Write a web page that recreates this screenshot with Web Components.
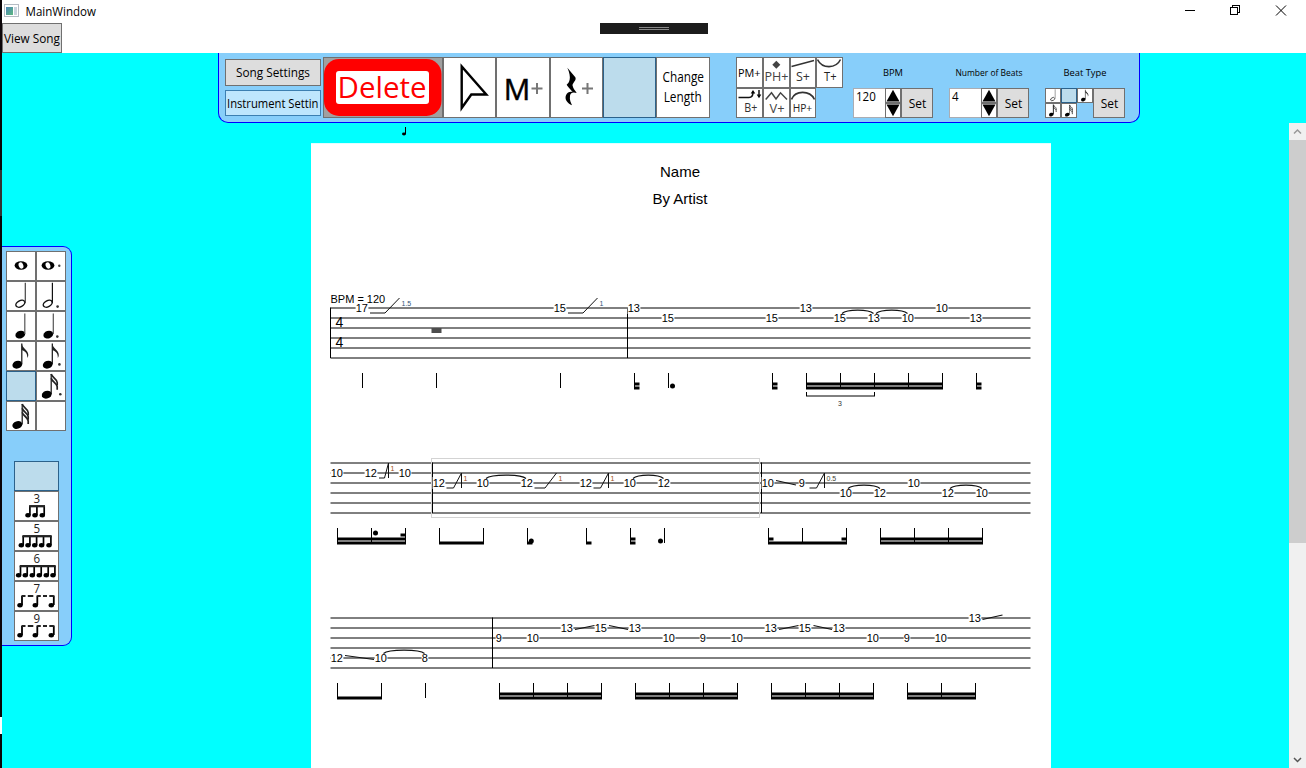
<!DOCTYPE html>
<html lang="en">
<head>
<meta charset="utf-8">
<title>MainWindow</title>
<style>
html,body{margin:0;height:100%;overflow:hidden;background:#fff}
body{font-family:"Open Sans","Noto Sans",sans-serif;font-size:12px;color:#000}
</style>
</head>
<body>
<main-window></main-window>
<script>
const SEGOE = '"Open Sans","Noto Sans",sans-serif';
const ARIAL = '"Liberation Sans",Arial,sans-serif';

/* text fitted to a given width, from x, on baseline y */
const txt = (s, x, y, w, size, fill = '#000', font = SEGOE) =>
  `<text x="${x}" y="${y}" textLength="${w}" lengthAdjust="spacingAndGlyphs" style='font:${size}px ${font}' fill="${fill}">${s}</text>`;

/* a single note: head centre, stem x and top, number of flags, optional dot */
function note({ x, y, sx, top = 1.5, flags = 0, open = false, dot, stem = '#111', sw = 1.2 }) {
  let o = open
    ? `<ellipse cx="${x}" cy="${y}" rx="4.8" ry="3" transform="rotate(-28 ${x} ${y})" fill="#fff" stroke="#111" stroke-width="1.4"/>`
    : `<ellipse cx="${x}" cy="${y}" rx="5" ry="3.8" transform="rotate(-18 ${x} ${y})" fill="#000"/>`;
  o += `<path d="M${sx} ${top}V${y - .5}" stroke="${stem}" stroke-width="${sw}"/>`;
  if (flags === 1)
    o += `<path d="M${sx} ${top}c.5 5 6.500 6.500 6.500 11.500c0 1-.3 2-1 3c.3-5-2.500-7-5.500-8z" fill="#222"/>`;
  else for (let i = 0; i < flags; i++) {
    const t = top + i * 4.200;
    o += `<path d="M${sx} ${t}c.8 3.500 5.500 4.500 6 8.500v3" fill="none" stroke="#222" stroke-width="1.700"/>`;
  }
  if (dot) o += `<circle cx="${dot[0]}" cy="${dot[1]}" r="1.300" fill="#333"/>`;
  return o;
}
const whole = x => `<ellipse cx="${x}" cy="13.500" rx="6.400" ry="4.200"/><ellipse cx="${x}" cy="13.500" rx="2.300" ry="3.300" transform="rotate(-20 ${x} 13.500)" fill="#fff"/>`;

const NOTES = {
  whole: whole(14),
  wholeDot: whole(11) + '<circle cx="22.300" cy="13.700" r="1.200" fill="#444"/>',
  half: note({ x: 13.3, y: 21.7, sx: 18.3, top: .7, open: true, stem: '#444' }),
  miniHalf: note({ x: 13.3, y: 21.7, sx: 18.8, top: .7, open: true, stem: '#bbb', sw: 3 }),
  halfDot: note({ x: 10.7, y: 21.7, sx: 15.4, top: .7, open: true, dot: [20.6, 24.6] }),
  quarter: note({ x: 13.3, y: 22.6, sx: 17.8, stem: '#555' }),
  quarterDot: note({ x: 11.3, y: 22.6, sx: 16.3, stem: '#555', dot: [20.3, 24.6] }),
  eighth: note({ x: 10.3, y: 22.7, sx: 14.8, flags: 1 }),
  eighthDot: note({ x: 10.7, y: 22.7, sx: 15.3, flags: 1, dot: [22.4, 22.4] }),
  sixteenth: note({ x: 10.3, y: 22.7, sx: 14.8, flags: 2, sw: 2 }),
  sixteenthDot: note({ x: 9.7, y: 22.7, sx: 14.2, top: 2, flags: 2, dot: [23.3, 22.3] }),
  thirtysecond: note({ x: 10.3, y: 23, sx: 15.2, top: 2, flags: 3 }),
  blank: ''
};

/* tuplet pictures, in a 43 x 28 box */
function tuplet(n) {
  let o = txt(n, 18.400, 11.200, 6.600, 12, '#222');
  const heads = { 3: [13, 20, 27.300], 5: [6.300, 13, 19.700, 26.600, 34], 6: [3.600, 10.300, 17.300, 24.300, 31.300, 38] }[n];
  if (heads) {
    heads.forEach(h => o += `<ellipse cx="${h}" cy="23.200" rx="2.700" ry="2.200"/><path d="M${h + 1.9} 14V23" stroke="#000" stroke-width="1.700"/>`);
    o += `<path d="M${heads[0] + 1.1} 14.200H${heads.at(-1) + 2.7}" stroke="#222" stroke-width="2.300"/>`;
  } else {
    [[5, 7], [20.300, 22.300], [36.300, 38.800]].forEach(([h, s], i) =>
      o += `<ellipse cx="${h}" cy="23.300" rx="2.700" ry="2.200"/><path d="M${s} 23V13.500" stroke="#000" stroke-width="1.800"/><path d="${i < 2 ? `M${s} 14h3.500` : `M${s} 14h-4.500`}" stroke="#222" stroke-width="2"/>`);
    o += '<path d="M12.800 14h5.500M28 14h4" stroke="#222" stroke-width="2"/>';
  }
  return o;
}

const plus = (x, y, r) => `<path d="M${x - r} ${y}h${2 * r}M${x} ${y - r}v${2 * r}" stroke="#777" stroke-width="2"/>`;

/* toolbar pictures */
const TOOLS = {
  song: txt('Song Settings', 236, 77, 74, 12),
  instrument: txt('Instrument Settin', 227, 108, 91.500, 12),
  view: txt('View Song', 4, 43, 56, 12),
  remove: '<rect x="324" y="59" width="117.500" height="57" rx="15" fill="#f00"/><rect x="336" y="71" width="93" height="33" rx="3" fill="#fff"/>' + txt('Delete', 337.500, 98, 89, 30, '#f00'),
  cursor: '<path d="M461.700 66.500V108L471.300 94.500H486.300Z" fill="#fff" stroke="#000" stroke-width="2.400"/>',
  measure: `<g stroke="#000" stroke-width=".5">${txt('M', 503.800, 100, 26.500, 30)}</g>` + plus(537, 88.500, 5.500),
  rest: '<path transform="translate(320 50) scale(.33333)" d="M742 53L766 82C771 92 755 100 758 108C760 116 766 122 770 129C758 124 750 130 750 138C748 150 753 158 756 166C742 160 733 148 738 136C741 126 752 124 758 126C750 116 742 108 740 104C748 98 756 84 742 53Z"/>' + plus(587.500, 88.500, 5.500),
  blank: '',
  length: txt('Change', 662.500, 82, 41.500, 14) + txt('Length', 663.700, 101.500, 38, 14),
  pm: txt('PM+', 738, 77, 22.500, 11),
  ph: '<path d="M776.300 60.700l4 4l-4 4l-4-4z" fill="#444"/>' + txt('PH+', 764.500, 80.500, 24, 13, '#444'),
  s: '<path d="M791.500 66.500L814 60.500" stroke="#333" stroke-width="1.600"/>' + txt('S+', 796, 80.500, 14, 12.500, '#333'),
  t: '<path d="M817.500 59.500C822 69 836 69 840.500 59.500" stroke="#333" stroke-width="1.600" fill="none"/>' + txt('T+', 824, 80.500, 12.500, 12.500, '#222'),
  b: '<path d="M738.500 97.500H749C752 97.500 753 96 753 92" stroke="#111" stroke-width="1.500" fill="none"/><path d="M750.700 93.500l2.300-3.500l2.300 3.500zM756.700 94.500h4.600l-2.300 3.800z"/><path d="M759 90v6" stroke="#111" stroke-width="1.500"/>' + txt('B+', 744.300, 112, 13, 12.500, '#333'),
  v: '<path d="M765.700 99.500L771.500 92.800L776 99L780.500 92.800L787 99.500" stroke="#444" stroke-width="1.500" fill="none"/>' + txt('V+', 769.500, 112.500, 15, 12.500, '#444'),
  hp: '<path d="M791.500 99.500C795 90 810 90 814.500 99.500" stroke="#333" stroke-width="1.600" fill="none"/>' + txt('HP+', 792.700, 111.500, 19.500, 10.500, '#222'),
};

class Base extends HTMLElement {
  connectedCallback() {
    if (!this.shadowRoot) this.attachShadow({ mode: 'open' }).innerHTML = this.render();
  }
}

/* push button: box="x y w h" gives its size and the origin of its picture */
class ToolButton extends Base {
  render() {
    const [x, y, w, h] = this.getAttribute('box').split(' ').map(Number);
    const look = { on: ['#bcdcec', '#2c628b'], hot: ['#bee6fd', '#3c7fb1'], face: ['#ddd', '#707070'], dark: ['#a0a0a0', '#707070'] }[this.getAttribute('look')] || ['#fff', '#707070'];
    return `<style>:host{display:block;flex:none;box-sizing:border-box;width:${w}px;height:${h}px;border:1px solid ${look[1]};background:${look[0]}}svg{display:block}</style>
    <svg width="${w - 2}" height="${h - 2}" viewBox="${x + 1} ${y + 1} ${w - 2} ${h - 2}">${TOOLS[this.getAttribute('icon')] || ''}</svg>`;
  }
}

class NoteButton extends Base {
  render() {
    const k = this.getAttribute('kind'), on = this.hasAttribute('on'), small = this.hasAttribute('small');
    const [w, h] = small ? [16, 15] : [30, 30];
    return `<style>:host{display:block;box-sizing:border-box;width:${w}px;height:${h}px;border:1px solid ${on ? '#2c628b' : '#707070'};background:${on ? '#bcdcec' : '#fff'}}svg{display:block}</style>
    <svg width="${w - 2}" height="${h - 2}" viewBox="0 0 28 28">${on ? '' : NOTES[k]}</svg>`;
  }
}

class TupletButton extends Base {
  render() {
    const on = this.hasAttribute('on');
    return `<style>:host{display:block;box-sizing:border-box;width:45px;height:30px;border:1px solid ${on ? '#2c628b' : '#707070'};background:${on ? '#bcdcec' : '#fff'}}svg{display:block}</style>
    <svg width="43" height="28">${on ? '' : tuplet(this.getAttribute('n'))}</svg>`;
  }
}

/* caption above an editor and its Set button */
class FieldGroup extends Base {
  render() {
    const w = this.getAttribute('width'), cap = this.getAttribute('caption'), cw = +this.getAttribute('cap-width');
    return `<style>:host{display:flex;flex:none;flex-direction:column;width:${w}px;height:61px}.cap{display:block;height:31px}.row{display:flex}
    .set{box-sizing:border-box;width:32px;height:30px;border:1px solid #707070;background:#ddd}svg{display:block}</style>
    <svg class="cap" width="${w}" height="31">${txt(cap, (w - cw) / 2, 19, cw, 9.300)}</svg>
    <div class="row"><slot></slot><div class="set"><svg width="30" height="28">${txt('Set', 6.700, 19, 17.500, 12)}</svg></div></div>`;
  }
}

class NumberSpinner extends Base {
  render() {
    const v = this.getAttribute('value');
    return `<style>:host{display:flex;height:30px}.in{box-sizing:border-box;width:32px;height:30px;background:#fff;border:1px solid #abadb3;border-right:0}
    .s{box-sizing:border-box;width:16px;height:15px;border:1px solid #707070;background:#fff}svg{display:block}</style>
    <div class="in"><svg width="31" height="28">${txt(v, 2, 12, v.length * 6.600, 12)}</svg></div>
    <div><div class="s"><svg width="14" height="13"><path d="M7 .8L13.500 12.500H.5Z"/></svg></div><div class="s"><svg width="14" height="13"><path d="M7 12.200L13.500 .5H.5Z"/></svg></div></div>`;
  }
}

class ToolBar extends Base {
  render() {
    const b = (box, icon, look = '') => `<tool-button box="${box}" icon="${icon}" look="${look}"></tool-button>`;
    return `<style>:host{display:flex;box-sizing:border-box;width:922px;height:70px;background:#87cefa;border:1px solid #00f;border-top:0;border-radius:0 0 10px 10px;padding:4px 0 0 6px}
    .set{display:flex;flex:none;flex-direction:column;gap:4px;padding-top:2px;width:98px}
    .fx{display:grid;flex:none;grid-template-columns:27px 27px 26px 27px;grid-template-rows:31px 30px;margin:0 10px 0 26px}
    field-group+field-group{margin-left:16px}.beats{display:grid;grid-template-columns:repeat(3,16px);grid-template-rows:15px 15px}</style>
    <div class="set">${b('225 59 96 27', 'song', 'face')}${b('225 90 96 26', 'instrument', 'hot')}</div>
    ${b('323 57 120 61', 'remove', 'dark')}${b('443 57 53 61', 'cursor')}${b('496 57 54 61', 'measure')}${b('550 57 53 61', 'rest')}${b('603 57 53 61', 'blank', 'on')}${b('656 57 54 61', 'length')}
    <div class="fx">${b('736 57 27 31', 'pm')}${b('763 57 27 31', 'ph')}${b('790 57 26 31', 's')}${b('816 57 27 31', 't')}${b('736 88 27 30', 'b')}${b('763 88 27 30', 'v')}${b('790 88 26 30', 'hp')}</div>
    <field-group caption="BPM" cap-width="20" width="80"><number-spinner value="120"></number-spinner></field-group>
    <field-group caption="Number of Beats" cap-width="67" width="80"><number-spinner value="4"></number-spinner></field-group>
    <field-group caption="Beat Type" cap-width="43" width="80"><div class="beats">
      <note-button small kind="miniHalf"></note-button><note-button small on></note-button><note-button small kind="eighth"></note-button><note-button small kind="sixteenth"></note-button><note-button small kind="thirtysecond"></note-button></div></field-group>`;
  }
}

class NotePanel extends Base {
  render() {
    const kinds = ['whole', 'wholeDot', 'half', 'halfDot', 'quarter', 'quarterDot', 'eighth', 'eighthDot', null, 'sixteenthDot', 'thirtysecond', 'blank'];
    return `<style>:host{display:block;box-sizing:border-box;width:70px;height:400px;background:#87cefa;border:1px solid #00f;border-left:0;border-radius:0 9px 9px 0;padding:4px 0 0 4px}
    .n{display:grid;grid-template-columns:30px 30px}.t{margin:30px 0 0 8px}</style>
    <div class="n">${kinds.map(k => k ? `<note-button kind="${k}"></note-button>` : '<note-button on></note-button>').join('')}</div>
    <div class="t"><tuplet-button on></tuplet-button>${[3, 5, 6, 7, 9].map(n => `<tuplet-button n="${n}"></tuplet-button>`).join('')}</div>`;
  }
}

/* Score data. y is the top string; notes are [x, string, fret]. */
const SYSTEMS = [
  { y: 308, bars: [330, 627],
    stems: [362, 436, 560, 634, 668, 772, 806, 840, 874, 908, 942, 976],
    notes: [[362, 0, 17], [560, 0, 15], [634, 0, 13], [668, 1, 15], [772, 1, 15], [806, 0, 13], [840, 1, 15], [874, 1, 13], [908, 1, 10], [942, 0, 10], [976, 1, 13]],
    beams: [[806, 943, 2], [634, 639.5, 2], [772, 777.5, 2], [976, 981.5, 2]],
    dots: [[672.5, 78]], slurs: [[842, 873.5, 5.5, 3.5], [876, 907.5, 5.5, 3.5]], slides: [],
    bends: [[370, 385, 399.5, 5, '1.5', 0], [568, 583, 597.5, 5, '1', 0]] },
  { y: 463, bars: [432, 761],
    stems: [337, 371, 405, 439, 483, 527, 586, 630, 664, 768, 802, 846, 880, 914, 948, 982],
    notes: [[337, 1, 10], [371, 1, 12], [405, 1, 10], [439, 2, 12], [483, 2, 10], [527, 2, 12], [586, 2, 12], [630, 2, 10], [664, 2, 12], [768, 2, 10], [802, 2, 9], [846, 3, 10], [880, 3, 12], [914, 2, 10], [948, 3, 12], [982, 3, 10]],
    beams: [[337, 406, 2], [439, 484, 1], [527, 532.5, 1], [586, 591.5, 1], [630, 635.5, 2], [768, 847, 1], [880, 983, 2]],
    bits: [[400.5, 405, 72], [768, 773.5, 76], [841.5, 847, 76]],
    dots: [[375.5, 70], [531.3, 78], [660.5, 78]],
    slurs: [[486, 526, 15.5, 3.5], [633, 663.5, 15.5, 3.5], [848, 880, 25.500, 3.500], [950, 982, 25.500, 3.500]],
    slides: [[776, 17.5, 796, 22]],
    bends: [[379, 384.5, 388.5, 15, '1', 1], [446.5, 453.5, 461.5, 25, '1', 1], [534.5, 545, 556.5, 25, '1', 0], [593.5, 600.5, 608.5, 25, '1', 1], [809.5, 816.5, 824.5, 25, '0.5', 1]] },
  { y: 618, bars: [492],
    stems: [337, 381, 425, 499, 533, 567, 601, 635, 669, 703, 737, 771, 805, 839, 873, 907, 941, 975],
    notes: [[337, 4, 12], [381, 4, 10], [425, 4, 8], [499, 2, 9], [533, 2, 10], [567, 1, 13], [601, 1, 15], [635, 1, 13], [669, 2, 10], [703, 2, 9], [737, 2, 10], [771, 1, 13], [805, 1, 15], [839, 1, 13], [873, 2, 10], [907, 2, 9], [941, 2, 10], [975, 0, 13]],
    beams: [[337, 382, 1], [499, 602, 2], [635, 738, 2], [771, 874, 2], [907, 976, 2]],
    dots: [], slurs: [[383.5, 424.5, 35.5, 3.5]],
    slides: [[345, 37.5, 374, 41.5], [575, 11.5, 594.5, 7.500], [609, 7.500, 628, 11.500], [779, 11.500, 798.500, 7.500], [813.500, 7.500, 832, 11.500], [982.500, 1.500, 1002.500, -3]],
    bends: [] }
];

class TabSystem extends Base {
  render() {
    const i = +this.getAttribute('index'), s = SYSTEMS[i], Y = s.y;
    let o = '';
    for (let k = 0; k < 6; k++) o += `<path d="M330.500 ${Y + k * 10}H1030.500" stroke="#000"/>`;
    s.bars.forEach(x => o += `<path d="M${x + .5} ${Y - .5}V${Y + 50}" stroke="#000"/>`);
    s.beams.forEach(([a, b, n]) => { for (let k = 0; k < n; k++) o += `<path d="M${a} ${Y + 80 - 4 * k}H${b}" stroke="#000" stroke-width="3"/>`; });
    (s.bits || []).forEach(([a, b, dy]) => o += `<path d="M${a} ${Y + dy}H${b}" stroke="#000" stroke-width="3"/>`);
    s.stems.forEach(x => o += `<path d="M${x + .5} ${Y + 65}V${Y + 80}" stroke="#000"/>`);
    s.dots.forEach(([x, dy]) => o += `<circle cx="${x}" cy="${Y + dy}" r="2.500"/>`);
    s.notes.forEach(([x, st, f]) => {
      const w = String(f).length * 6.100, y = Y + st * 10;
      o += `<rect x="${x - w / 2 - .3}" y="${y - 6}" width="${w + .6}" height="12" fill="#fff"/>` +
        `<text x="${x - w / 2 - .2}" y="${y + 4}" style='font:11px ${ARIAL}'>${f}</text>`;
    });
    s.slurs.forEach(([a, b, dy, h]) => o += `<path d="M${a} ${Y + dy}C${a + 5} ${Y + dy - h * 1.300} ${b - 5} ${Y + dy - h * 1.300} ${b} ${Y + dy}" fill="none" stroke="#111" stroke-width="1.100"/>`);
    s.slides.forEach(([a, b, c, d]) => o += `<path d="M${a} ${Y + b}L${c} ${Y + d}" stroke="#111" stroke-width="1.200"/>`);
    s.bends.forEach(([a, b, c, dy, t, rel]) => {
      o += `<path d="M${a} ${Y + dy}H${b}L${c} ${Y + dy - 15}${rel ? 'v15' : ''}" fill="none" stroke="#111"/>`;
      o += `<text x="${c + 2}" y="${Y + dy - 7}" style='font:7px ${ARIAL}' fill="${t === '0.5' ? '#443' : i ? '#a04a10' : '#357'}">${t}</text>`;
    });
    if (i === 0) o += `<text x="330.500" y="303" style='font:11px ${ARIAL}'>BPM = 120</text>
      <text x="335.500" y="326.500" style='font:14px ${ARIAL}'>4</text><text x="335.500" y="346.500" style='font:14px ${ARIAL}'>4</text>
      <rect x="431.500" y="328" width="10" height="5" fill="#4d4d4d"/>
      <path d="M806.500 392V396M874.500 392V396M806 396H875" stroke="#000"/><text x="838" y="405.500" style='font:7px ${ARIAL}' fill="#333">3</text>`;
    if (i === 1) o += '<rect x="431.500" y="458.500" width="328" height="59" fill="none" stroke="#d3d3d3"/>';
    return `<style>:host{display:block;height:155px}svg{display:block}</style><svg width="740" height="155" viewBox="311 ${Y - 23} 740 155">${o}</svg>`;
  }
}

class ScorePage extends Base {
  render() {
    return `<style>:host{display:block;box-sizing:border-box;width:740px;height:625px;overflow:hidden;background:#fff;font:15px/27px ${ARIAL};text-align:center;padding-top:14px;border-top:1px solid #dff}
    p{margin:0;padding-right:2px}.by{margin-bottom:73px}</style><p>Name</p><p class="by">By Artist</p>
    <tab-system index="0"></tab-system><tab-system index="1"></tab-system><tab-system index="2"></tab-system>`;
  }
}

class ScrollBar extends Base {
  render() {
    return `<style>:host{display:flex;flex-direction:column;width:17px;background:#f0f0f0}.thumb{height:403px;background:#cdcdcd}.gap{flex:1}svg{display:block}</style>
    <svg width="17" height="17"><path d="M5 10.500L8.500 7L12 10.500" fill="none" stroke="#999" stroke-width="1.500"/></svg><div class="thumb"></div><div class="gap"></div>
    <svg width="17" height="17"><path d="M5 7L8.500 10.500L12 7" fill="none" stroke="#555" stroke-width="1.500"/></svg>`;
  }
}

class TitleBar extends Base {
  render() {
    return `<style>:host{display:flex;height:23px;background:#fff}svg{display:block}.sp{flex:1}</style>
    <svg width="120" height="23"><defs><linearGradient id="g" x2="1" y2="1"><stop stop-color="#4a86b8"/><stop offset="1" stop-color="#5cb87e"/></linearGradient></defs>
      <rect x="2.500" y="4.500" width="14" height="12" fill="#fff" stroke="#b5bcc4"/><rect x="4" y="7" width="7" height="8" fill="url(#g)"/><rect x="12" y="7" width="3" height="8" fill="#c9d4df"/>${txt('MainWindow', 23.500, 16, 70.500, 12)}</svg><div class="sp"></div>
    <svg width="136" height="23" viewBox="1170 0 136 23" fill="none" stroke="#000" shape-rendering="crispEdges"><path d="M1185 10.500h10M1230.500 7.500h7v7h-7zM1232.500 7.500v-2h7v7h-2"/><path d="M1276 5.500l10 10M1286 5.500l-10 10" shape-rendering="auto"/></svg>`;
  }
}

class MainWindow extends Base {
  render() {
    return `<style>:host{display:flex;height:768px}
    .edge{width:2px;height:768px;flex:none;background:linear-gradient(#0b0508 170px,#333 170px 216px,#0b0508 216px 717px,#fff 717px 734px,#0b0508 734px)}
    .win{position:relative;flex:1;display:flex;flex-direction:column}
    .menu{display:flex;height:30px;background:#fff}
    .grip{position:absolute;left:598px;top:23px;width:108px;height:11px;background:#1c1c1c}
    .work{flex:1;background:#0ff;display:flex;flex-direction:column}
    tool-bar{margin-left:216px}
    .body{flex:1;display:flex}note-panel{margin-top:123px;flex:none}
    .doc{flex:1;padding-left:239px}.mark{display:block}svg{display:block}</style>
    <div class="edge"></div>
    <div class="win"><title-bar></title-bar>
      <div class="menu"><tool-button box="2 23 60 30" icon="view" look="face"></tool-button></div>
      <div class="grip"><svg width="108" height="11"><path d="M39 4.500h30M39 6.500h30" stroke="#888"/></svg></div>
      <div class="work"><tool-bar></tool-bar>
        <div class="body"><note-panel></note-panel>
          <div class="doc"><svg class="mark" width="740" height="20" viewBox="311 123 740 20"><ellipse cx="404" cy="134" rx="2" ry="1.400"/><path d="M405.500 127v7" stroke="#000"/></svg><score-page></score-page></div>
          <scroll-bar></scroll-bar></div></div></div>`;
  }
}

for (const [n, c] of Object.entries({ 'tool-button': ToolButton, 'note-button': NoteButton, 'tuplet-button': TupletButton, 'field-group': FieldGroup, 'number-spinner': NumberSpinner, 'tool-bar': ToolBar, 'note-panel': NotePanel, 'tab-system': TabSystem, 'score-page': ScorePage, 'scroll-bar': ScrollBar, 'title-bar': TitleBar, 'main-window': MainWindow }))
  customElements.define(n, c);
</script>
</body>
</html>
